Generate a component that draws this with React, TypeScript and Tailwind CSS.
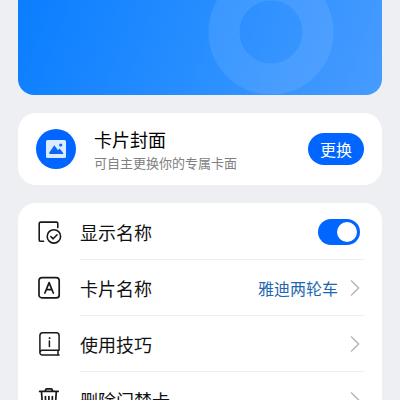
import React, { useState } from 'react';

interface RowProps {
  icon: React.ReactNode;
  label: string;
  value?: string;
  last?: boolean;
}

const DisplayIcon = () => (
  <svg className="h-6 w-6" viewBox="0 0 24 24" fill="none" stroke="#191919" strokeWidth="1.6" strokeLinecap="round" strokeLinejoin="round">
    <path d="M5.6 21.3H2.6A1.4 1.4 0 0 1 1.2 19.9V3.5A1.4 1.4 0 0 1 2.6 2.1H18.4A1.4 1.4 0 0 1 19.8 3.5V7.6" />
    <circle cx="15.9" cy="16.4" r="6.7" />
    <path d="m12.9 16.6 2.3 2.2 3.9-4" />
  </svg>
);

const NameIcon = () => (
  <svg className="h-6 w-6" viewBox="0 0 24 24" fill="none" stroke="#191919" strokeWidth="1.7" strokeLinecap="round" strokeLinejoin="round">
    <rect x="1" y="1.7" width="20.2" height="20.2" rx="3" />
    <path d="M6.9 17 11.1 6.6 15.3 17M8.4 13.6h5.4" />
  </svg>
);

const TipsIcon = () => (
  <svg className="h-6 w-6" viewBox="0 0 24 24" fill="none" stroke="#191919" strokeWidth="1.5" strokeLinecap="round" strokeLinejoin="round">
    <path d="M21.1 18.2H4.3A2.4 2.4 0 0 0 1.9 20.5V3.3A2.8 2.8 0 0 1 4.7.8H18.3A2.8 2.8 0 0 1 21.1 3.6V18.2ZM1.9 20.5A2.4 2.4 0 0 0 4.3 23H21.1M20 18.4V22.8" />
    <path d="M11.4 8.9V14.4" />
    <circle cx="11.4" cy="6.1" r="0.5" fill="#191919" strokeWidth="1" />
  </svg>
);

const TrashIcon = () => (
  <svg className="h-6 w-6" viewBox="0 0 24 24" fill="none" stroke="#191919" strokeWidth="1.7" strokeLinecap="round" strokeLinejoin="round">
    <path d="M1.6 3.4H20.2M3.5 3.6 4.6 20A2 2 0 0 0 6.6 21.9H15.2A2 2 0 0 0 17.2 20L18.3 3.6" />
    <path d="M7.4 3.2V2.4A1.7 1.7 0 0 1 9.1.8H12.7A1.7 1.7 0 0 1 14.4 2.4V3.2M7.4 8.6 7.7 16.8M10.9 8.6V16.8M14.4 8.6 14.1 16.8" />
  </svg>
);

const PictureIcon = () => (
  <svg className="h-5 w-5" viewBox="0 0 20 20">
    <rect y="1" width="20" height="18" rx="1.5" fill="#dcebff" />
    <path d="M3.3 15V13.6L8.3 6.2 12 11.3 13.6 9.6 17.2 13.9V15Z" fill="#0a66f5" />
    <circle cx="14.7" cy="6" r="1.6" fill="#0a66f5" />
  </svg>
);

const Chevron = () => (
  <svg className="h-4 w-2.5" viewBox="0 0 10 16" fill="none" stroke="#b5b5b5" strokeWidth="1.4">
    <path d="M1 .6 8.6 8 1 15.4" />
  </svg>
);

const Row = ({ icon, label, value, last }: RowProps) => (
  <button type="button" className="flex h-14 w-full items-center gap-[18px] pl-5 text-left">
    {icon}
    <span className={`mr-[18px] flex h-full flex-1 items-center pr-1 ${last ? '' : 'border-b border-[#efefef]'}`}>
      <span className="text-lg text-[#111]">{label}</span>
      <span className="ml-auto text-base text-[#1f68b0]">{value}</span>
      <span className="ml-3">
        <Chevron />
      </span>
    </span>
  </button>
);

export default function App() {
  const [showName, setShowName] = useState(true);

  return (
    <main className="h-screen overflow-hidden bg-[#eeeff2] px-[18px] font-['Noto_Sans_CJK_SC',sans-serif]">
      {/* Card face */}
      <section className="overflow-hidden rounded-b-2xl bg-linear-[110deg] from-[#0a7eff] via-[#288eff] to-[#479bff]">
        <svg className="ml-auto block h-[95px] w-44" viewBox="0 0 176 95">
          <circle cx="65" cy="32" r="47" fill="none" stroke="#fff" strokeOpacity="0.09" strokeWidth="31" />
        </svg>
      </section>

      {/* Cover */}
      <section className="mt-[18px] flex items-center rounded-[18px] bg-white px-[18px] py-3">
        <span className="flex h-10 w-10 items-center justify-center rounded-full bg-[#0066ff]">
          <PictureIcon />
        </span>
        <div className="ml-[18px] flex-1">
          <h2 className="text-lg leading-7 text-black">卡片封面</h2>
          <p className="text-[13px] leading-5 text-[#808080]">可自主更换你的专属卡面</p>
        </div>
        <button type="button" className="h-8 rounded-full bg-[#0066ff] px-3 text-base text-white">
          更换
        </button>
      </section>

      {/* Settings */}
      <section className="mt-[18px] rounded-[18px] bg-white pt-px">
        <div className="flex h-14 items-center gap-[18px] pl-5">
          <DisplayIcon />
          <div className="mr-[18px] flex h-full flex-1 items-center justify-between border-b border-[#efefef] pr-1">
            <label htmlFor="show-name" className="text-lg text-[#111]">显示名称</label>
            <input
              id="show-name"
              type="checkbox"
              role="switch"
              checked={showName}
              onChange={(e) => setShowName(e.target.checked)}
              className="flex h-[26px] w-[42px] appearance-none items-center rounded-full bg-[#c9c9c9] px-[3px] before:h-5 before:w-5 before:rounded-full before:bg-white checked:justify-end checked:bg-[#0066ff]"
            />
          </div>
        </div>
        <Row icon={<NameIcon />} label="卡片名称" value="雅迪两轮车" />
        <Row icon={<TipsIcon />} label="使用技巧" />
        <Row icon={<TrashIcon />} label="删除门禁卡" last />
      </section>
    </main>
  );
}
